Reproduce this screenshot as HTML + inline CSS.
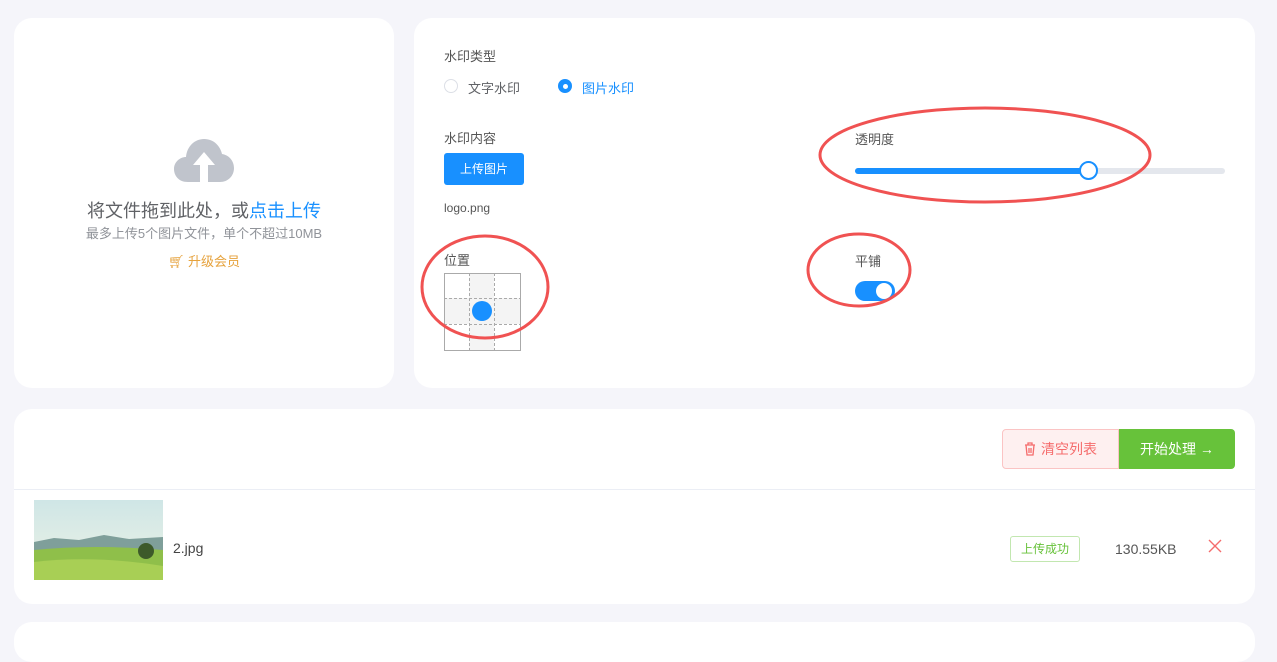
<!DOCTYPE html>
<html><head><meta charset="utf-8"><style>
*{margin:0;padding:0;box-sizing:border-box}
body{width:1277px;height:626px;background:#f5f5fa;font-family:"Liberation Sans","Noto Sans CJK SC",sans-serif;position:relative;overflow:hidden;color:#555}
.card{position:absolute;background:#fff;border-radius:18px}
.a{position:absolute;white-space:nowrap}
</style></head><body>
<div class="card" style="left:14px;top:18px;width:380px;height:370px"></div>
<div class="card" style="left:414px;top:18px;width:841px;height:370px"></div>
<div class="card" style="left:14px;top:409px;width:1241px;height:195px"></div>
<div class="card" style="left:14px;top:622px;width:1241px;height:40px"></div>

<svg class="a" style="left:174px;top:138px" width="60" height="46" viewBox="0 0 60 46"><path d="M14 44 C4 44 0 37 0 31 C0 24 6 19 12 19 C13 8 21 1 30 1 C40 1 46 8 48 16 C55 17 60 23 60 30 C60 38 54 44 46 44 Z" fill="#c0c4cc"/><path d="M30 14 L41 27 L34 27 L34 46 L26 46 L26 27 L19 27 Z" fill="#fff"/></svg>
<div class="a" style="left:0;width:408px;text-align:center;top:197px;font-size:18px;color:#606266">将文件拖到此处，或<span style="color:#1890ff">点击上传</span></div>
<div class="a" style="left:0;width:408px;text-align:center;top:223px;font-size:13px;color:#909399">最多上传5个图片文件，单个不超过10MB</div>
<div class="a" style="left:0;width:408px;text-align:center;top:251px;font-size:13px;color:#e6a23c">🛒︎ 升级会员</div>

<div class="a" style="left:444px;top:46px;font-size:13px">水印类型</div>
<div class="a" style="left:444px;top:79px;width:14px;height:14px;border:1px solid #dcdfe6;border-radius:50%"></div>
<div class="a" style="left:468px;top:78px;font-size:13px;color:#606266">文字水印</div>
<div class="a" style="left:558px;top:79px;width:14px;height:14px;background:#1890ff;border-radius:50%"><div style="width:5px;height:5px;background:#fff;border-radius:50%;margin:4.5px"></div></div>
<div class="a" style="left:582px;top:78px;font-size:13px;color:#1890ff">图片水印</div>
<div class="a" style="left:444px;top:128px;font-size:13px">水印内容</div>
<div class="a" style="left:444px;top:153px;width:80px;height:32px;background:#1890ff;border-radius:3px;color:#fff;font-size:12px;text-align:center;line-height:32px">上传图片</div>
<div class="a" style="left:444px;top:201px;font-size:12px;color:#555">logo.png</div>
<div class="a" style="left:444px;top:250px;font-size:13px">位置</div>
<svg class="a" style="left:444px;top:273px" width="77" height="78"><rect x="25" y="0.5" width="25" height="77" fill="#f4f4f4"/><rect x="0.5" y="25" width="76" height="26" fill="#f4f4f4"/><rect x="0.5" y="0.5" width="76" height="77" fill="none" stroke="#aaa"/><g stroke="#aaa" stroke-dasharray="3 2"><line x1="25.5" y1="0" x2="25.5" y2="78"/><line x1="50.5" y1="0" x2="50.5" y2="78"/><line x1="0" y1="25.5" x2="77" y2="25.5"/><line x1="0" y1="51.5" x2="77" y2="51.5"/></g><circle cx="38" cy="38" r="10" fill="#1890ff"/></svg>

<div class="a" style="left:855px;top:129px;font-size:13px">透明度</div>
<div class="a" style="left:855px;top:168px;width:370px;height:6px;background:#e4e7ed;border-radius:3px"></div>
<div class="a" style="left:855px;top:168px;width:234px;height:6px;background:#1890ff;border-radius:3px"></div>
<div class="a" style="left:1079px;top:161px;width:19px;height:19px;background:#fff;border:2px solid #1890ff;border-radius:50%"></div>
<div class="a" style="left:855px;top:251px;font-size:13px">平铺</div>
<div class="a" style="left:855px;top:281px;width:40px;height:20px;background:#1890ff;border-radius:10px"><div style="position:absolute;left:21px;top:2px;width:16px;height:16px;background:#fff;border-radius:50%"></div></div>

<svg class="a" style="left:0;top:0" width="1277" height="626" fill="none" stroke="#f05252" stroke-width="3"><ellipse cx="985" cy="155" rx="165" ry="47"/><ellipse cx="485" cy="287" rx="63" ry="51"/><ellipse cx="859" cy="270" rx="51" ry="36"/></svg>

<div class="a" style="left:1002px;top:429px;width:117px;height:40px;background:#fef0f0;border:1px solid #fbc4c4;border-radius:4px 0 0 4px;color:#f56c6c;font-size:14px;line-height:38px;text-align:center"><svg width="12" height="14" viewBox="0 0 12 14" style="vertical-align:-2px;margin-right:5px" fill="none" stroke="#f56c6c" stroke-width="1.3"><path d="M1 3h10M4 3V1h4v2M2 3l1 10h6l1-10M5 6v5M7 6v5"/></svg>清空列表</div>
<div class="a" style="left:1119px;top:429px;width:116px;height:40px;background:#67c23a;border-radius:0 4px 4px 0;color:#fff;font-size:14px;line-height:40px;text-align:center">开始处理 →</div>
<div class="a" style="left:14px;top:489px;width:1241px;height:1px;background:#ebeef5"></div>

<svg class="a" style="left:34px;top:500px" width="129" height="80"><defs><linearGradient id="s" x1="0" y1="0" x2="0" y2="1"><stop offset="0" stop-color="#cfe6e6"/><stop offset="1" stop-color="#eef3e6"/></linearGradient></defs><rect width="129" height="80" fill="url(#s)"/><path d="M0 42 L20 38 L45 40 L70 35 L95 39 L129 37 L129 50 L0 52Z" fill="#7f9f9a"/><path d="M0 50 Q60 44 129 50 L129 80 L0 80Z" fill="#8fbf4a"/><path d="M0 62 Q60 55 129 66 L129 80 L0 80Z" fill="#a8cf55"/><circle cx="112" cy="51" r="8" fill="#3d5a2a"/></svg>
<div class="a" style="left:173px;top:540px;font-size:14px;color:#444">2.jpg</div>
<div class="a" style="left:1010px;top:536px;width:70px;height:26px;border:1px solid #c2e7b0;border-radius:3px;color:#67c23a;font-size:12px;line-height:24px;text-align:center">上传成功</div>
<div class="a" style="left:1115px;top:541px;font-size:14px;color:#555">130.55KB</div>
<svg class="a" style="left:1208px;top:539px" width="14" height="14" stroke="#f56c6c" stroke-width="1.4"><path d="M1 1L13 13M13 1L1 13"/></svg>
</body></html>
